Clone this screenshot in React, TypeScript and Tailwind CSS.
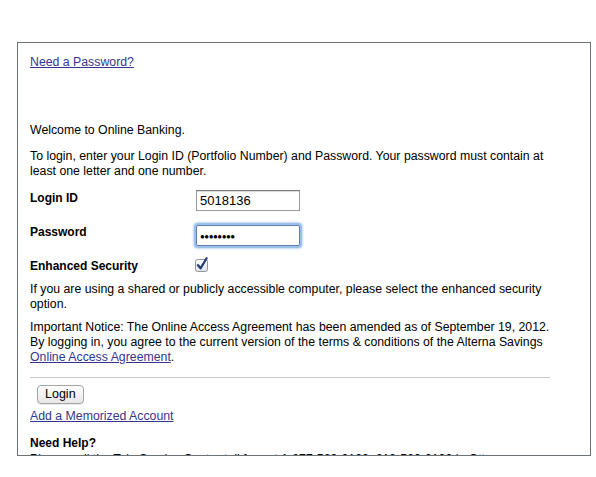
import React from "react";

const font = { fontFamily: '"Liberation Sans", Arial, Helvetica, sans-serif' };

function CheckBox() {
  return (
    <svg width="14" height="15" viewBox="0 0 14 15" className="block">
      <defs>
        <linearGradient id="cbg" x1="0" y1="0" x2="0" y2="1">
          <stop offset="0" stopColor="#ffffff" />
          <stop offset="1" stopColor="#dfe3ea" />
        </linearGradient>
      </defs>
      <rect x="0.5" y="2.5" width="12" height="12" rx="2" fill="url(#cbg)" stroke="#8f969e" />
      <path d="M3 8.2 L5.6 11.3 L11.6 1.2" fill="none" stroke="#1d3a74" strokeWidth="2.2" strokeLinecap="round" strokeLinejoin="round" />
    </svg>
  );
}

export default function App() {
  return (
    <div className="w-[596px] h-[477px] bg-white overflow-hidden text-[12.3px] leading-[15px] text-black" style={font}>
      <div className="ml-[17px] mt-[42px] w-[574px] h-[414px] border border-[#6c7479] overflow-hidden pl-[12px] pt-[12px]">
        <a href="#" className="text-[#35358f] underline">Need a Password?</a>
        <p className="mt-[53px]">Welcome to Online Banking.</p>
        <p className="mt-[11px] whitespace-nowrap">
          To login, enter your Login ID (Portfolio Number) and Password. Your password must contain at
          <br />
          least one letter and one number.
        </p>
        <div className="mt-[11px] flex flex-col">
          <div className="flex items-start h-[34px]">
            <div className="w-[166px] pt-[1px] font-bold text-[12px]">Login ID</div>
            <div className="w-[104px] h-[21px] border border-[#9a9a9a] border-t-[#777] shadow-[inset_0_1px_1px_rgba(0,0,0,0.15)] px-[3px] flex items-center text-[13px]">
              5018136
            </div>
          </div>
          <div className="flex items-start h-[34px]">
            <div className="w-[166px] pt-[1px] font-bold text-[12px]">Password</div>
            <div className="w-[104px] h-[21px] mt-[1px] border border-[#5b7fae] shadow-[0_0_0_2px_#9cc0ea,0_0_2px_3px_#c3d9f3] rounded-[2px] px-[3px] flex items-center">
              <span className="text-[8px] tracking-[-0.5px] leading-none mt-[2px]">●●●●●●●●</span>
            </div>
          </div>
          <div className="flex items-start h-[24px]">
            <div className="w-[165px] pt-[1px] font-bold text-[12px]">Enhanced Security</div>
            <div className="-mt-[1px]">
              <CheckBox />
            </div>
          </div>
        </div>
        <p className="whitespace-nowrap">
          If you are using a shared or publicly accessible computer, please select the enhanced security
          <br />
          option.
        </p>
        <p className="mt-[8px] whitespace-nowrap">
          Important Notice: The Online Access Agreement has been amended as of September 19, 2012.
          <br />
          By logging in, you agree to the current version of the terms &amp; conditions of the Alterna Savings
          <br />
          <a href="#" className="text-[#35358f] underline">Online Access Agreement</a>.
        </p>
        <div className="mt-[12px] w-[520px] h-px bg-[#c5cace]" />
        <div className="mt-[7px] ml-[7px]">
          <button className="h-[19px] px-[7px] rounded-[4px] border border-[#a4a4a4] bg-gradient-to-b from-white to-[#e6e6e6] text-[12.5px] leading-[15px] shadow-[0_1px_0_rgba(0,0,0,0.08)]" style={font}>
            Login
          </button>
        </div>
        <div className="mt-[5px]">
          <a href="#" className="text-[#35358f] underline">Add a Memorized Account</a>
        </div>
        <p className="mt-[12px] font-bold text-[12px]">Need Help?</p>
        <p className="mt-[1px] whitespace-nowrap">
          Please call the Tele Service Centre toll free at 1-877-560-0100, 613-560-0100 in Ottawa.
        </p>
      </div>
    </div>
  );
}
